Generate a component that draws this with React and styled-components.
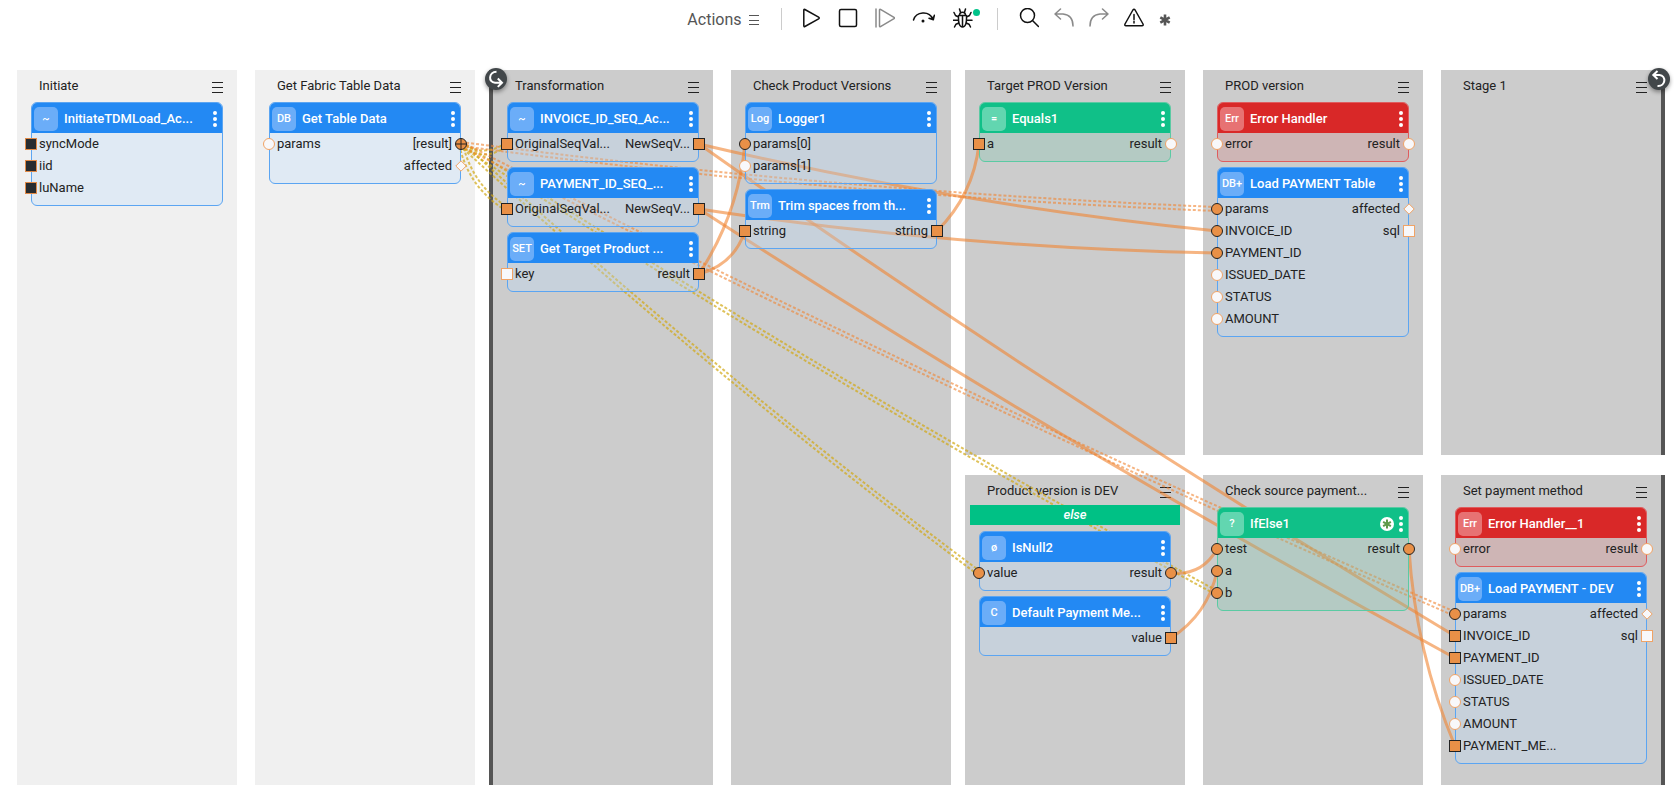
import React, { useState, useRef, useLayoutEffect } from 'react';
import styled, { createGlobalStyle, css } from 'styled-components';

const THEMES = {
  blue: { head: '#2389f3', badge: '#6badf8', border: '#5ba5f2', body: 'rgba(188, 223, 255, 0.3)' },
  green: { head: '#10c088', badge: '#62d6b0', border: '#5bcaa3', body: 'rgba(125, 200, 175, 0.3)' },
  red: { head: '#d92828', badge: '#e77273', border: '#df5c5e', body: 'rgba(212, 130, 130, 0.3)' },
};

const loadInputs = (names) => names.map(([name, shape, state]) => ({ name, shape, state }));

const mainStages = [
  {
    title: 'Initiate',
    light: true,
    nodes: [
      {
        id: 'init', badge: '~', title: 'InitiateTDMLoad_Ac...',
        inputs: [
          { name: 'syncMode', shape: 'square', state: 'dark' },
          { name: 'iid', shape: 'square', state: 'dark' },
          { name: 'luName', shape: 'square', state: 'dark' },
        ],
      },
    ],
  },
  {
    title: 'Get Fabric Table Data',
    light: true,
    nodes: [
      {
        id: 'table', badge: 'DB', title: 'Get Table Data',
        inputs: [{ name: 'params', shape: 'circle' }],
        outputs: [
          { name: '[result]', shape: 'cross', state: 'linked' },
          { name: 'affected', shape: 'diamond' },
        ],
      },
    ],
  },
  {
    title: 'Transformation',
    loop: 'start',
    nodes: [
      {
        id: 'invoiceSeq', badge: '~', title: 'INVOICE_ID_SEQ_Ac...',
        inputs: [{ name: 'OriginalSeqVal...', shape: 'square', state: 'linked' }],
        outputs: [{ name: 'NewSeqV...', shape: 'square', state: 'linked' }],
      },
      {
        id: 'paymentSeq', badge: '~', title: 'PAYMENT_ID_SEQ_...',
        inputs: [{ name: 'OriginalSeqVal...', shape: 'square', state: 'linked' }],
        outputs: [{ name: 'NewSeqV...', shape: 'square', state: 'linked' }],
      },
      {
        id: 'target', badge: 'SET', title: 'Get Target Product ...',
        inputs: [{ name: 'key', shape: 'square' }],
        outputs: [{ name: 'result', shape: 'square', state: 'linked' }],
      },
    ],
  },
  {
    title: 'Check Product Versions',
    nodes: [
      {
        id: 'logger', badge: 'Log', title: 'Logger1',
        inputs: [
          { name: 'params[0]', shape: 'circle', state: 'linked' },
          { name: 'params[1]', shape: 'circle' },
        ],
      },
      {
        id: 'trim', badge: 'Trm', title: 'Trim spaces from th...',
        inputs: [{ name: 'string', shape: 'square', state: 'linked' }],
        outputs: [{ name: 'string', shape: 'square', state: 'linked' }],
      },
    ],
  },
];

const branchStages = [
  {
    title: 'Target PROD Version',
    nodes: [
      {
        id: 'equals', badge: '=', title: 'Equals1', color: 'green',
        inputs: [{ name: 'a', shape: 'square', state: 'linked' }],
        outputs: [{ name: 'result', shape: 'circle' }],
      },
    ],
  },
  {
    title: 'PROD version',
    nodes: [
      {
        id: 'error', badge: 'Err', title: 'Error Handler', color: 'red',
        inputs: [{ name: 'error', shape: 'circle' }],
        outputs: [{ name: 'result', shape: 'circle' }],
      },
      {
        id: 'load', badge: 'DB+', title: 'Load PAYMENT Table',
        inputs: loadInputs([
          ['params', 'circle', 'linked'],
          ['INVOICE_ID', 'circle', 'linked'],
          ['PAYMENT_ID', 'circle', 'linked'],
          ['ISSUED_DATE', 'circle'],
          ['STATUS', 'circle'],
          ['AMOUNT', 'circle'],
        ]),
        outputs: [
          { name: 'affected', shape: 'diamond' },
          { name: 'sql', shape: 'square' },
        ],
      },
    ],
  },
  { title: 'Stage 1', loop: 'end', loopBadge: true, nodes: [] },
  {
    title: 'Product version is DEV',
    condition: 'else',
    nodes: [
      {
        id: 'isNull', badge: 'ø', title: 'IsNull2',
        inputs: [{ name: 'value', shape: 'circle', state: 'linked' }],
        outputs: [{ name: 'result', shape: 'circle', state: 'linked' }],
      },
      {
        id: 'method', badge: 'C', title: 'Default Payment Me...',
        outputs: [{ name: 'value', shape: 'square', state: 'linked' }],
      },
    ],
  },
  {
    title: 'Check source payment...',
    nodes: [
      {
        id: 'ifElse', badge: '?', title: 'IfElse1', color: 'green', starred: true,
        inputs: [
          { name: 'test', shape: 'circle', state: 'linked' },
          { name: 'a', shape: 'circle', state: 'linked' },
          { name: 'b', shape: 'circle', state: 'linked' },
        ],
        outputs: [{ name: 'result', shape: 'circle', state: 'linked' }],
      },
    ],
  },
  {
    title: 'Set payment method',
    loop: 'end',
    nodes: [
      {
        id: 'errorDev', badge: 'Err', title: 'Error Handler__1', color: 'red',
        inputs: [{ name: 'error', shape: 'circle' }],
        outputs: [{ name: 'result', shape: 'circle' }],
      },
      {
        id: 'loadDev', badge: 'DB+', title: 'Load PAYMENT - DEV',
        inputs: loadInputs([
          ['params', 'circle', 'linked'],
          ['INVOICE_ID', 'square', 'linked'],
          ['PAYMENT_ID', 'square', 'linked'],
          ['ISSUED_DATE', 'circle'],
          ['STATUS', 'circle'],
          ['AMOUNT', 'circle'],
          ['PAYMENT_ME...', 'square', 'linked'],
        ]),
        outputs: [
          { name: 'affected', shape: 'diamond' },
          { name: 'sql', shape: 'square' },
        ],
      },
    ],
  },
];

// from / to are "<node id>.<in|out>.<port index>"
const links = [
  { from: 'table.out.0', to: 'invoiceSeq.in.0', type: 'iterate' },
  { from: 'table.out.0', to: 'paymentSeq.in.0', type: 'iterate' },
  { from: 'table.out.0', to: 'isNull.in.0', type: 'iterate' },
  { from: 'table.out.0', to: 'ifElse.in.2', type: 'iterate' },
  { from: 'table.out.0', to: 'load.in.0', type: 'record' },
  { from: 'table.out.0', to: 'loadDev.in.0', type: 'record' },
  { from: 'invoiceSeq.out.0', to: 'load.in.1' },
  { from: 'invoiceSeq.out.0', to: 'loadDev.in.1' },
  { from: 'paymentSeq.out.0', to: 'load.in.2' },
  { from: 'paymentSeq.out.0', to: 'loadDev.in.2' },
  { from: 'target.out.0', to: 'logger.in.0' },
  { from: 'target.out.0', to: 'trim.in.0' },
  { from: 'trim.out.0', to: 'equals.in.0' },
  { from: 'isNull.out.0', to: 'ifElse.in.0' },
  { from: 'method.out.0', to: 'ifElse.in.1' },
  { from: 'ifElse.out.0', to: 'loadDev.in.6' },
];

const BEND = 17;

// every link sags a little below the straight line; shift moves it sideways for double links
const linkPath = (a, b, shift = 0) => {
  const dx = b.x - a.x;
  const dy = b.y - a.y;
  const len = Math.hypot(dx, dy) || 1;
  const nx = -dy / len;
  const ny = dx / len;
  const p = (x, y, d) => `${x + nx * d} ${y + ny * d}`;
  return `M${p(a.x, a.y, shift)} Q${p(a.x + dx / 2, a.y + dy / 2, BEND + shift)} ${p(b.x, b.y, shift)}`;
};

const App = () => {
  return (
    <Page>
      <GlobalStyle />
      <Toolbar />
      <Canvas />
    </Page>
  );
}

const Canvas = () => {
  const canvasRef = useRef(null);
  const [ ports, setPorts ] = useState({});

  useLayoutEffect(() => {
    const canvas = canvasRef.current;
    const measure = () => {
      const base = canvas.getBoundingClientRect();
      const found = {};
      canvas.querySelectorAll('[data-port]').forEach(el => {
        const r = el.getBoundingClientRect();
        found[el.dataset.port] = {
          x: r.left + r.width / 2 - base.left,
          y: r.top + r.height / 2 - base.top
        };
      });
      setPorts(found);
    };
    measure();
    const observer = new ResizeObserver(measure);
    observer.observe(canvas);
    return () => observer.disconnect();
  }, []);

  const makeLinks = () => {
    return links.map(({ from, to, type }) => {
      const a = ports[from];
      const b = ports[to];
      if(!a || !b){
        return null;
      }
      if(type){
        return (
          <g key={from + to}>
            <DottedLink $type={type} d={linkPath(a, b, -2)} />
            <DottedLink $type={type} d={linkPath(a, b, 2)} />
          </g>
        );
      }
      return <SolidLink key={from + to} d={linkPath(a, b)} />;
    });
  }

  return (
    <CanvasGrid ref={canvasRef}>
      {mainStages.map(stage => <Stage key={stage.title} {...stage} />)}
      <Branches>
        {branchStages.map(stage => <Stage key={stage.title} {...stage} />)}
      </Branches>
      <LinkLayer aria-hidden="true">{makeLinks()}</LinkLayer>
    </CanvasGrid>
  );
}

const Stage = ({ title, light, loop, loopBadge, condition, nodes }) => {
  return (
    <StageBox $light={light} $loop={loop}>
      {loop == 'start' && <LoopBadge $side="left"><LoopStartIcon /></LoopBadge>}
      {loopBadge && <LoopBadge $side="right"><LoopEndIcon /></LoopBadge>}
      <StageHeader>
        <StageTitle>{title}</StageTitle>
        <IconButton aria-label={`${title} menu`}><MenuIcon /></IconButton>
      </StageHeader>
      {condition && <Condition>{condition}</Condition>}
      <NodeList>
        {nodes.map(node => <Node key={node.id} {...node} />)}
      </NodeList>
    </StageBox>
  );
}

const Node = ({ id, badge, title, color = 'blue', starred, inputs = [], outputs = [] }) => {
  const theme = THEMES[color];
  return (
    <NodeBox $theme={theme}>
      <NodeHeader $theme={theme}>
        <Badge $theme={theme}>{badge}</Badge>
        <NodeTitle>{title}</NodeTitle>
        {starred && <StarIcon />}
        <IconButton aria-label={`${title} options`}><KebabIcon /></IconButton>
      </NodeHeader>
      <NodeBody>
        <PortList>
          {inputs.map((port, i) => (
            <PortItem key={port.name}>
              <Port id={`${id}.in.${i}`} {...port} />
              {port.name}
            </PortItem>
          ))}
        </PortList>
        <PortList>
          {outputs.map((port, i) => (
            <PortItem key={port.name} $out>
              {port.name}
              <Port id={`${id}.out.${i}`} {...port} />
            </PortItem>
          ))}
        </PortList>
      </NodeBody>
    </NodeBox>
  );
}

const Port = ({ id, shape, state = 'empty' }) => {
  return (
    <PortSvg data-port={id} $state={state} viewBox="0 0 12 12">
      {shape == 'square' && <rect x="0.5" y="0.5" width="11" height="11" />}
      {(shape == 'circle' || shape == 'cross') && <circle cx="6" cy="6" r="5.5" />}
      {shape == 'cross' && <path d="M6 0.5v11M0.5 6h11" />}
      {shape == 'diamond' && <path d="M6 0.8L11.2 6L6 11.2L0.8 6z" />}
    </PortSvg>
  );
}

const Toolbar = () => {
  return (
    <Bar>
      <ActionsButton>Actions <SmallMenuIcon /></ActionsButton>
      <Tools $gap={17}>
        <IconButton aria-label="Run">
          <Icon $w={20} viewBox="0 0 20 20"><path d="M2.8 2.2v15.6q0 1.2 1.1.7L17.6 10.9q1.3-.9 0-1.7L3.900 1.500q-1.100-.5-1.100.7z" /></Icon>
        </IconButton>
        <IconButton aria-label="Stop">
          <Icon $w={20} viewBox="0 0 20 20"><rect x="1.5" y="1.5" width="17" height="17" rx="1.5" /></Icon>
        </IconButton>
        <IconButton aria-label="Step">
          <Icon $w={20} $muted viewBox="0 0 20 20"><path d="M1 1v18M4.5 2v16q0 1 1 .6L19 10.7q1-.7 0-1.300L5.500 1.400q-1-.4-1 .6z" /></Icon>
        </IconButton>
        <IconButton aria-label="Step over">
          <Icon $w={24} viewBox="0 0 24 20">
            <path d="M1.500 12C4 3.500 17 2 21 11.200M17 10.200l4.300 1.600 1-4.500" />
            <circle cx="11" cy="13" r="1.500" fill="#111" stroke="none" />
            <path d="M18 10l3.300 1.600 1-3.600z" fill="#111" stroke="none" />
          </Icon>
        </IconButton>
        <IconButton aria-label="Debug">
          <Icon $w={28} viewBox="0 0 28 20">
            <path d="M5.500 7.500Q5 19 9.500 19T13.500 7.500zM9.500 7.500V19M6.500 7.500C6.500 3 12.500 3 12.500 7.500M7.500 4.300L6.500 1M11.500 4.300L12.500 1M5.500 9L2.500 7.500 1 4.500M13.500 9l3-1.500L18 4.500M5.200 12.200H0M13.800 12.200H19M5.800 15L3 16.200 1.500 19M13.200 15l2.800 1.200 1.500 2.800" />
            <circle cx="23.500" cy="4.500" r="3.500" fill="#00c389" stroke="none" />
          </Icon>
        </IconButton>
      </Tools>
      <Tools $gap={15}>
        <IconButton aria-label="Search">
          <Icon $w={20} viewBox="0 0 20 20"><circle cx="8.500" cy="7.500" r="7" /><path d="M13.500 12.500L19.500 18.500" /></Icon>
        </IconButton>
        <IconButton aria-label="Undo">
          <Icon $w={20} $muted viewBox="0 0 20 20"><path d="M6.500 1L1 6l5.500 5M1 6h8q10 1 10 12" /></Icon>
        </IconButton>
        <IconButton aria-label="Redo">
          <Icon $w={20} $muted viewBox="0 0 20 20"><path d="M13.500 1L19 6l-5.500 5M19 6h-8Q1 7 1 18" /></Icon>
        </IconButton>
        <IconButton aria-label="Warnings">
          <Icon $w={20} viewBox="0 0 20 20"><path d="M8.900 2L1 16q-.6 1.700 1 1.700h16q1.600 0 1-1.700L11.100 2q-1.100-1.500-2.200 0zM10 6.500v5M10 13.300v1.800" /></Icon>
        </IconButton>
        <IconButton aria-label="Breakpoints">
          <Icon $w={12} viewBox="0 0 12 20"><path d="M6 6.500v11M1.300 9.300l9.400 5.400M10.700 9.300L1.300 14.700" stroke="#555" strokeWidth="2.600" strokeLinecap="butt" /></Icon>
        </IconButton>
      </Tools>
    </Bar>
  );
}

const MenuIcon = () => (
  <svg width="12" height="14" viewBox="0 0 12 14" stroke="#222" strokeWidth="1">
    <path d="M0 3.500h11M0 8.500h11M0 13.500h11" />
  </svg>
);

const SmallMenuIcon = () => (
  <svg width="10" height="12" viewBox="0 0 10 12" stroke="#555" strokeWidth="1">
    <path d="M0 1.500h10M0 6.500h10M0 10.500h10" />
  </svg>
);

const KebabIcon = () => (
  <svg width="4" height="16" viewBox="0 0 4 16" fill="#fff">
    <circle cx="2" cy="2" r="2" />
    <circle cx="2" cy="8" r="2" />
    <circle cx="2" cy="14" r="2" />
  </svg>
);

const StarIcon = () => (
  <svg width="14" height="14" viewBox="0 0 14 14">
    <circle cx="7" cy="7" r="7" fill="#fff" />
    <path d="M7 2.500v9M3.100 4.800l7.800 4.400M10.900 4.800L3.100 9.200" stroke="#5f9a4b" strokeWidth="2" />
  </svg>
);

const LoopStartIcon = () => (
  <svg width="22" height="22" viewBox="0 0 22 22" fill="none" stroke="#fff" strokeWidth="2">
    <path d="M11.500 3.800C3.500 4 3 14.500 10 14.700h6.500M12.800 10.500l4.200 4.200-4.200 4.200" />
  </svg>
);

const LoopEndIcon = () => (
  <svg width="22" height="22" viewBox="0 0 22 22" fill="none" stroke="#fff" strokeWidth="2">
    <path d="M9.500 18c8.500.5 9-10.500 2-11H5.500M9.500 3L5.300 7l4.200 4" />
  </svg>
);

export default App;



const GlobalStyle = createGlobalStyle`
body {
  margin: 0;
  background: #fff;
  color: #222;
  font: 13px/22px Roboto, "Liberation Sans", sans-serif;
}

* {
  box-sizing: border-box;
}
`;

const Page = styled.div`
display: flex;
flex-direction: column;
min-height: 100vh;
`;

const Bar = styled.header`
display: flex;
align-items: center;
height: 38px;
padding-left: 41%;
`;

const IconButton = styled.button`
display: flex;
align-items: center;
padding: 0;
border: 0;
background: none;
cursor: pointer;
`;

const ActionsButton = styled(IconButton)`
gap: 8px;
margin: 0 22px 0 1px;
padding-top: 2px;
color: #555;
font: 16px/22px Roboto, "Liberation Sans", sans-serif;
`;

const Tools = styled.div`
display: flex;
align-items: center;
gap: ${p => p.$gap}px;
height: 22px;
margin-right: 16px;
padding: 0 0 2px 19px;
border-left: 1px solid #ccc;

& + & {
  padding-left: 21px;
}
`;

const Icon = styled.svg`
width: ${p => p.$w}px;
height: 20px;
fill: none;
stroke: ${p => p.$muted ? '#8a8a8a' : '#111'};
stroke-width: 1.5;
stroke-linecap: round;
stroke-linejoin: round;
`;

const CanvasGrid = styled.main`
flex: 1;
position: relative;
display: grid;
grid-template-columns: repeat(7, minmax(220px, 1fr));
column-gap: 18px;
margin: 32px 9px 0 17px;
`;

const Branches = styled.div`
grid-column: 5 / span 3;
display: grid;
grid-template-columns: repeat(3, 1fr);
grid-template-rows: minmax(385px, auto) 1fr;
gap: 20px 18px;
margin-left: -4px;
padding-right: 4px;
`;

const StageBox = styled.section`
position: relative;
padding-bottom: 20px;
background: ${p => p.$light ? '#f0f0f0' : '#ccc'};
${p => p.$loop && css`
  box-shadow: ${p.$loop == 'start' ? '-4px' : '4px'} 0 0 #555;
`}
`;

const StageHeader = styled.div`
display: flex;
align-items: center;
justify-content: space-between;
height: 32px;
padding: 0 13px 0 22px;
`;

const StageTitle = styled.h2`
margin: 0;
font-size: 13px;
font-weight: 400;
`;

const Condition = styled.div`
position: relative;
z-index: 2;
height: 20px;
margin: -2px 5px 6px;
background: #00c185;
color: #fff;
font-style: italic;
font-weight: 500;
line-height: 20px;
text-align: center;
`;

const LoopBadge = styled.div`
position: absolute;
z-index: 3;
top: -2px;
${p => p.$side}: ${p => p.$side == 'left' ? -8 : -9}px;
width: 22px;
height: 22px;
border-radius: 50%;
background: #42474a;
box-shadow: 0 2px 4px rgba(0, 0, 0, 0.4);
`;

const NodeList = styled.div`
display: flex;
flex-direction: column;
gap: 5px;
padding: 0 14px;
`;

const NodeBox = styled.article`
position: relative;
z-index: 2;
border: 1px solid ${p => p.$theme.border};
border-radius: 6px;
background: ${p => p.$theme.body};
`;

const NodeHeader = styled.div`
display: flex;
align-items: center;
height: 30px;
padding: 1px 5px 0 2px;
border-radius: 5px 5px 0 0;
background: ${p => p.$theme.head};
color: #fff;
`;

const Badge = styled.span`
flex: none;
width: 24px;
height: 24px;
border-radius: 5px;
background: ${p => p.$theme.badge};
font-size: 11px;
font-weight: 500;
line-height: 24px;
text-align: center;
`;

const NodeTitle = styled.h3`
flex: 1;
margin: 0 0 0 6px;
font-size: 13px;
font-weight: 500;
white-space: nowrap;

& + svg {
  margin-right: 5px;
}
`;

const NodeBody = styled.div`
display: flex;
justify-content: space-between;
padding-bottom: 6px;
`;

const PortList = styled.ul`
margin: 0;
padding: 0;
list-style: none;
`;

const PortItem = styled.li`
display: flex;
align-items: center;
justify-content: ${p => p.$out ? 'flex-end' : 'flex-start'};
gap: ${p => p.$out ? 3 : 2}px;
height: 22px;
margin: ${p => p.$out ? '0 -7px 0 0' : '0 0 0 -7px'};
white-space: nowrap;
`;

const portStates = {
  empty: css`fill: #f8f8fa; stroke: #f0a366;`,
  linked: css`fill: #e99047; stroke: #222;`,
  dark: css`fill: #282c30; stroke: #e08a48;`,
};

const PortSvg = styled.svg`
flex: none;
width: 12px;
height: 12px;
${p => portStates[p.$state]}
`;

const LinkLayer = styled.svg`
position: absolute;
inset: 0;
z-index: 1;
width: 100%;
height: 100%;
fill: none;
pointer-events: none;
`;

const SolidLink = styled.path`
stroke: rgba(240, 131, 48, 0.6);
stroke-width: 3;
`;

const DottedLink = styled.path`
stroke: ${p => p.$type == 'iterate' ? 'rgba(210, 168, 20, 0.7)' : 'rgba(240, 131, 48, 0.6)'};
stroke-width: 2;
stroke-dasharray: 3 2;
`;
